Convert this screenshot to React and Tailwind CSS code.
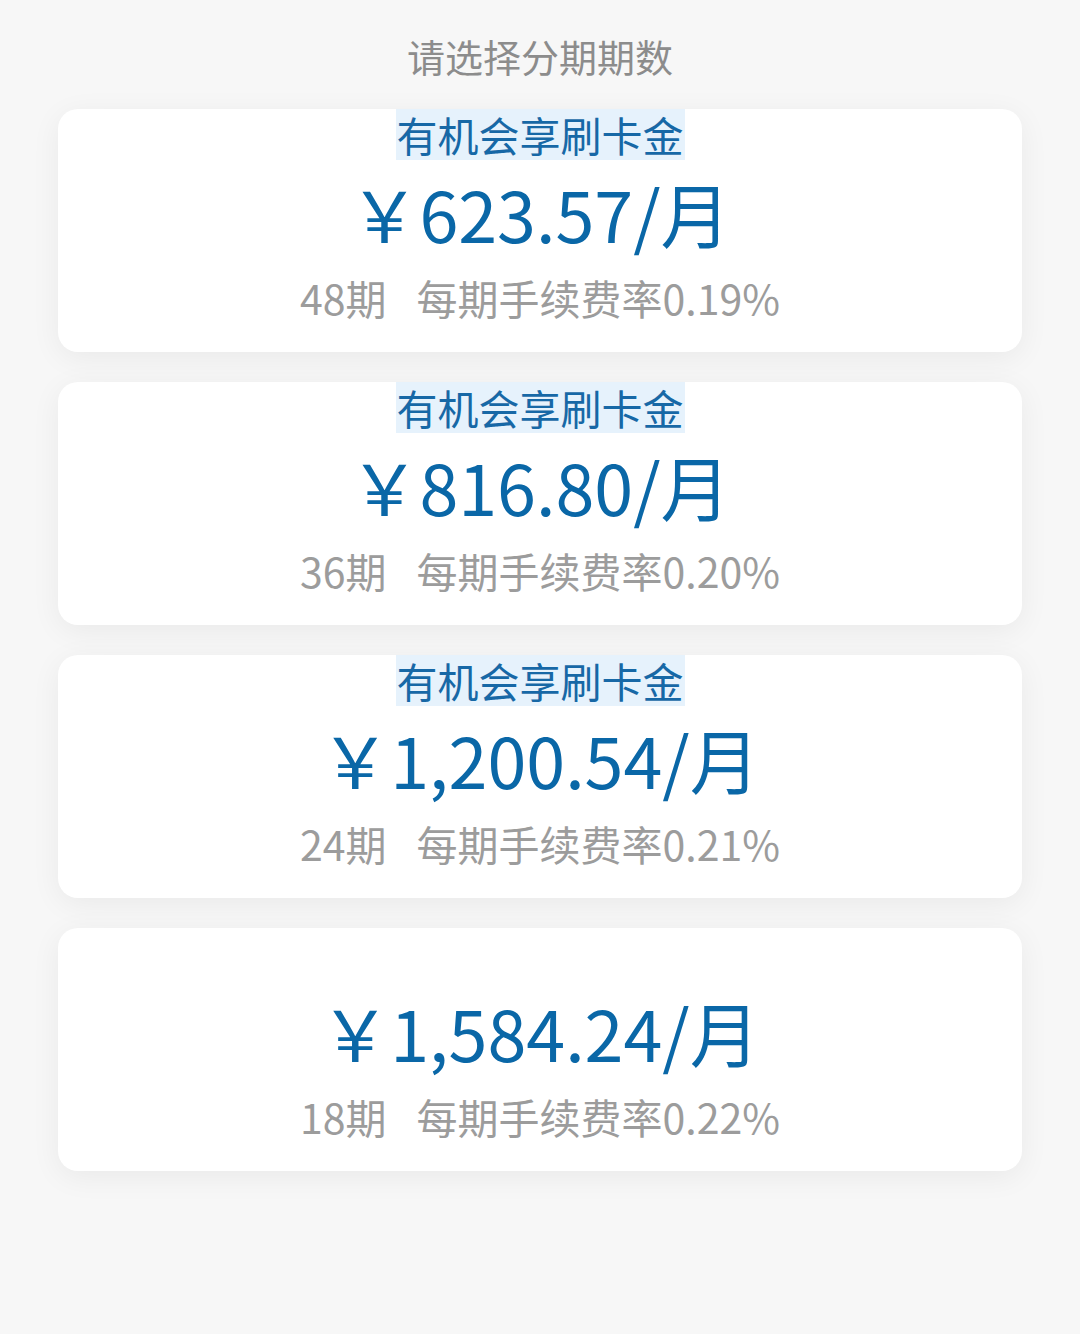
import React from "react";

const items = [
  { tag: true, price: "￥623.57/月", term: "48期", rate: "每期手续费率0.19%" },
  { tag: true, price: "￥816.80/月", term: "36期", rate: "每期手续费率0.20%" },
  { tag: true, price: "￥1,200.54/月", term: "24期", rate: "每期手续费率0.21%" },
  { tag: false, price: "￥1,584.24/月", term: "18期", rate: "每期手续费率0.22%" },
];

const font = { fontFamily: '"Noto Sans CJK SC", "Noto Sans", sans-serif' };

export default function App() {
  return (
    <div
      className="w-[1080px] min-h-[1334px] bg-[#f7f7f7] flex flex-col"
      style={font}
    >
      <div className="h-[109px] flex justify-center pt-[28px]">
        <div className="text-[38px] leading-[56px] text-[#8c8c8c]">请选择分期期数</div>
      </div>
      <div className="flex flex-col gap-[30px] px-[58px]">
        {items.map((it, i) => (
          <div
            key={i}
            className="h-[243px] bg-white rounded-[20px] shadow-[0_6px_30px_rgba(0,0,0,0.06)] flex flex-col items-center"
          >
            <div className="h-[51px] flex items-center">
              {it.tag ? (
                <div className="h-[51px] px-[1px] bg-[#e6f2fc] text-[#1768a6] text-[41px] leading-[51px]">
                  有机会享刷卡金
                </div>
              ) : null}
            </div>
            <div className="mt-[11px] text-[70px] leading-[84px] text-[#0a67a7]">
              {it.price}
            </div>
            <div className="mt-[16px] text-[41px] leading-[52px] text-[#9c9c9c] flex">
              <span>{it.term}</span>
              <span className="ml-[30px]">{it.rate}</span>
            </div>
          </div>
        ))}
      </div>
    </div>
  );
}
